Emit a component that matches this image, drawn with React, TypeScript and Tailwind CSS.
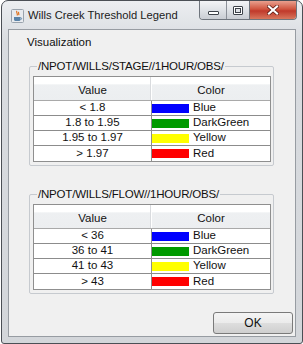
import React from 'react';

interface Row {
  value: string;
  color: string;
  name: string;
}

const stageRows: Row[] = [
  { value: '< 1.8', color: '#0000ff', name: 'Blue' },
  { value: '1.8 to 1.95', color: '#009a00', name: 'DarkGreen' },
  { value: '1.95 to 1.97', color: '#ffff00', name: 'Yellow' },
  { value: '> 1.97', color: '#ff0000', name: 'Red' },
];

const flowRows: Row[] = [
  { value: '< 36', color: '#0000ff', name: 'Blue' },
  { value: '36 to 41', color: '#009a00', name: 'DarkGreen' },
  { value: '41 to 43', color: '#ffff00', name: 'Yellow' },
  { value: '> 43', color: '#ff0000', name: 'Red' },
];

function JavaIcon() {
  return (
    <svg width="13" height="14" viewBox="0 0 13 14">
      <rect x="0.5" y="0.5" width="12" height="13" rx="1" fill="#e8ebef" stroke="#9aa3ad" />
      <path d="M6 2 C4.5 3.5 7.5 4.5 6 6.5 M7.8 3 C6.8 4.2 8.6 4.8 7.6 6.2" stroke="#e0701a" strokeWidth="1.2" fill="none" />
      <path d="M3 8 H9.5 V10.5 C9.5 11.5 8.5 12 7.5 12 H5 C4 12 3 11.5 3 10.5 Z" fill="#5a83a8" />
      <path d="M9.5 8.6 C11 8.6 11 10.6 9.5 10.6" stroke="#5a83a8" strokeWidth="0.9" fill="none" />
    </svg>
  );
}

function ThresholdTable({ rows }: { rows: Row[] }) {
  return (
    <div className="mt-[3px] w-[238px] border border-[#8f8f8f] bg-white">
      <div className="flex h-[24px] border-b border-[#a9a9a9] bg-[linear-gradient(#ffffff_0%,#ffffff_30%,#eef0f2_34%,#eceef0_100%)]">
        <div className="flex w-[117px] items-center justify-center pt-[4px]">Value</div>
        <div className="w-px bg-[#ffffff] shadow-[-1px_0_0_#d9dbde]" />
        <div className="flex flex-1 items-center justify-center pt-[4px]">Color</div>
      </div>
      {rows.map((row, i) => (
        <div
          key={row.name}
          className={`flex h-[15px] ${i < rows.length - 1 ? 'border-b border-[#8c8c8c]' : ''}`}
        >
          <div className="flex w-[117px] items-center justify-center">{row.value}</div>
          <div className="w-px bg-[#8c8c8c]" />
          <div className="flex flex-1 items-center">
            <div className="h-[9px] w-[37px]" style={{ backgroundColor: row.color }} />
            <span className="ml-[4px]">{row.name}</span>
          </div>
        </div>
      ))}
    </div>
  );
}

function Group({ title, rows, className }: { title: string; rows: Row[]; className?: string }) {
  return (
    <fieldset
      className={`ml-[20px] w-[245px] rounded-[2px] border border-[#c6cacf] pb-[3px] pl-[3px] pr-[2px] ${className ?? ''}`}
    >
      <legend className="ml-[4px] px-[1px] leading-[13px] tracking-[-0.2px]">{title}</legend>
      <ThresholdTable rows={rows} />
    </fieldset>
  );
}

export default function App() {
  return (
    <div className="h-[344px] w-[303px] bg-white font-['Liberation_Sans',Arial,sans-serif] text-[11.5px] text-[#111]">
      <div className="ml-[1px] flex h-[344px] w-[302px] flex-col rounded-t-[7px] rounded-b-[3px] border border-[#4b4f55] bg-[linear-gradient(#eceef1,#d9dce0_40px,#d3d6da)]">
        {/* title bar */}
        <div className="flex h-[28px] items-start">
          <div className="ml-[9px] mt-[8px]">
            <JavaIcon />
          </div>
          <div className="ml-[4px] mt-[8px] text-[11.2px] leading-[13px] text-[#1b1b1b]">
            Wills Creek Threshold Legend
          </div>
          <div className="flex-1" />
          <div className="mr-[5px] flex h-[19px] overflow-hidden rounded-b-[4px] border border-t-0 border-[#6f757d]">
            <div className="flex w-[27px] items-center justify-center border-r border-[#8b9098] bg-[linear-gradient(#f3f4f6,#dfe2e6_50%,#c9cdd3)]">
              <div className="mt-[5px] h-[4px] w-[11px] rounded-[1px] border border-[#3d4249] bg-white" />
            </div>
            <div className="flex w-[23px] items-center justify-center border-r border-[#6f757d] bg-[linear-gradient(#f3f4f6,#dfe2e6_50%,#c9cdd3)]">
              <div className="h-[9px] w-[10px] rounded-[1px] border border-[#3d4249] bg-white p-[1px]">
                <div className="h-full w-full border border-[#3d4249] bg-[#dfe2e6]" />
              </div>
            </div>
            <div className="flex w-[46px] items-center justify-center bg-[linear-gradient(#e9a08e,#d0553f_45%,#c0392b_55%,#d8775d)]">
              <svg width="12" height="10" viewBox="0 0 12 10">
                <path d="M2 1.5 L10 8.5 M10 1.5 L2 8.5" stroke="#5a1a10" strokeWidth="3.6" strokeLinecap="square" />
                <path d="M2 1.5 L10 8.5 M10 1.5 L2 8.5" stroke="#ffffff" strokeWidth="2.2" strokeLinecap="square" />
              </svg>
            </div>
          </div>
        </div>
        {/* frame + client */}
        <div className="mx-[6px] flex h-[308px] flex-col border border-[#979ca2] bg-[#f0f0f0]">
          <div className="ml-[18px] mt-[6px] leading-[13px]">Visualization</div>
          <Group title="/NPOT/WILLS/STAGE//1HOUR/OBS/" rows={stageRows} className="mt-[11px]" />
          <Group title="/NPOT/WILLS/FLOW//1HOUR/OBS/" rows={flowRows} className="mt-[22px]" />
          <div className="mt-[18px] flex justify-end pr-[2px]">
            <button className="h-[22px] w-[80px] rounded-[3px] border border-[#7a7a7a] bg-[linear-gradient(#f4f4f4,#ebebeb_50%,#dddddd_52%,#cfcfcf)] text-[12px] leading-none text-[#111]">
              OK
            </button>
          </div>
        </div>
      </div>
    </div>
  );
}
